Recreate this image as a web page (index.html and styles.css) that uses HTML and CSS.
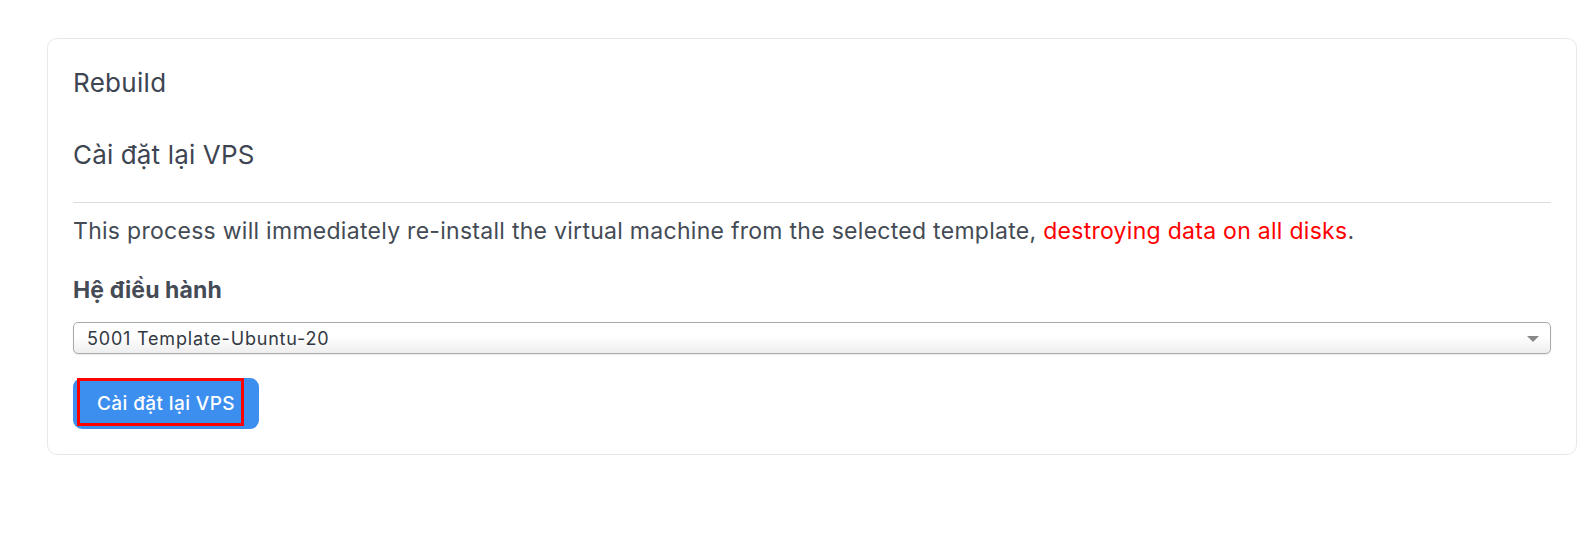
FILE: index.html
```html
<!DOCTYPE html>
<html lang="vi">
<head>
<meta charset="utf-8">
<title>Rebuild</title>
<link rel="stylesheet" href="styles.css">
</head>
<body>
<div class="page">
  <div class="card">
    <h4 class="card-title">Rebuild</h4>
    <h5 class="section-title">Cài đặt lại VPS</h5>
    <hr class="divider">
    <p class="desc">This process will immediately re-install the virtual machine from the selected template, <span class="danger">destroying data on all disks</span>.</p>
    <label class="field-label">Hệ điều hành</label>
    <div class="select">
      <span class="select-text">5001 Template-Ubuntu-20</span>
      <span class="select-arrow"></span>
    </div>
    <div class="actions">
      <button class="btn" type="button">Cài đặt lại VPS<span class="highlight"></span></button>
    </div>
  </div>
</div>
</body>
</html>
```
FILE: styles.css
```css
* { box-sizing: border-box; }
html, body { margin: 0; padding: 0; background: #fff; }
body { font-family: Inter, "Noto Sans", sans-serif; color: #444b55; }
.page { padding: 38px 19px 0 47px; }
.card {
  width: 1530px;
  height: 417px;
  border: 1px solid #e8e8e8;
  border-radius: 10px;
  padding: 25px 25px 0 25px;
  display: flex;
  flex-direction: column;
}
.card-title {
  margin: 3px 0 0;
  font-size: 26px;
  font-weight: 400;
  line-height: 32px;
  letter-spacing: 0.3px;
  color: #3e4552;
}
.section-title {
  margin: 40px 0 0;
  font-size: 26px;
  font-weight: 400;
  line-height: 32px;
  letter-spacing: 0.15px;
  color: #3e4552;
}
.divider {
  margin: 31px 0 0;
  border: 0;
  border-top: 1px solid #dedede;
  height: 0;
}
.desc {
  margin: 13px 0 0;
  font-size: 23px;
  line-height: 30px;
  letter-spacing: 0.28px;
  color: #444b55;
}
.danger { color: #ff0000; }
.field-label {
  margin-top: 29px;
  font-size: 23px;
  font-weight: 700;
  line-height: 30px;
  letter-spacing: 0.1px;
  color: #444b55;
}
.select {
  margin-top: 17px;
  height: 32px;
  border: 1px solid #aaaaaa;
  border-radius: 5px;
  background: linear-gradient(to bottom, #ffffff 0%, #ffffff 45%, #eeeeee 100%);
  display: flex;
  align-items: center;
  padding: 0 11px 0 13px;
  box-shadow: 0 1px 2px rgba(0,0,0,0.08);
}
.select-text {
  flex: 1;
  font-size: 18px;
  letter-spacing: 0.8px;
  color: #333a44;
}
.select-arrow {
  width: 0; height: 0;
  border-left: 6px solid transparent;
  border-right: 6px solid transparent;
  border-top: 6px solid #888;
  margin-top: 2px;
}
.actions { margin-top: 24px; }
.btn {
  position: relative;
  width: 186px;
  height: 51px;
  border: 0;
  border-radius: 9px;
  background: #3d8fef;
  color: #fff;
  font-family: Inter, "Noto Sans", sans-serif;
  font-size: 19px;
  font-weight: 500;
  letter-spacing: 0.4px;
  text-align: left;
  padding: 0 0 0 24px;
  cursor: pointer;
}
.highlight {
  position: absolute;
  left: 4px;
  top: 0;
  width: 167px;
  height: 48px;
  border: 3px solid #ff0000;
  pointer-events: none;
}
```
